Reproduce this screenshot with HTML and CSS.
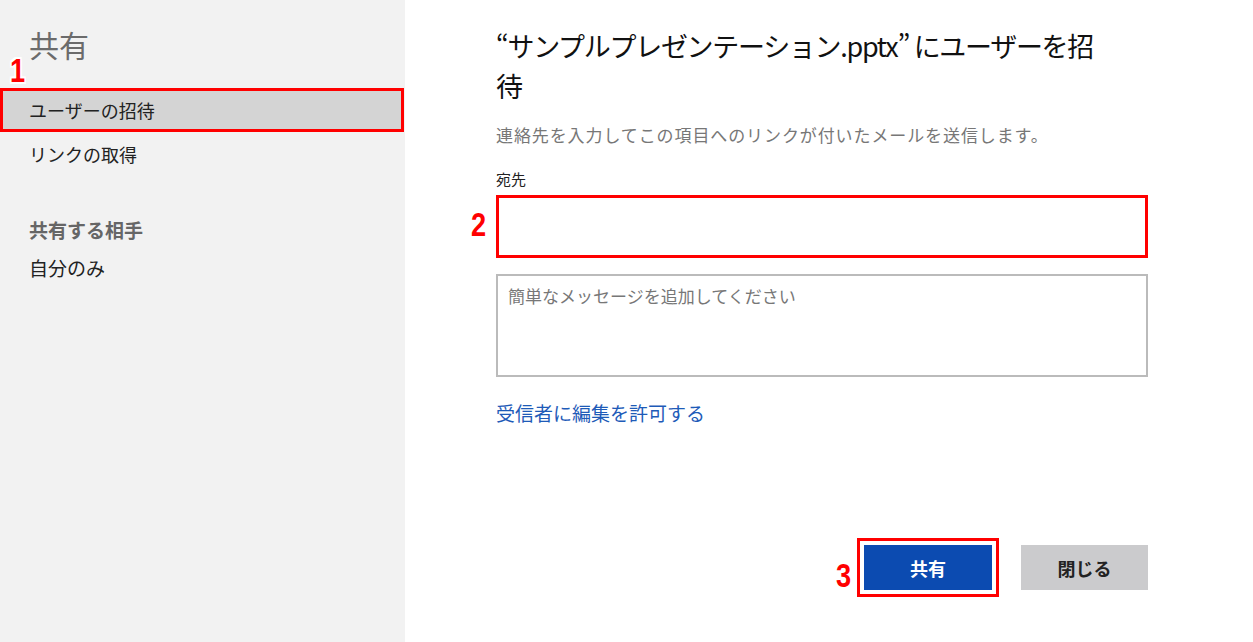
FILE: index.html
```html
<!DOCTYPE html>
<html lang="ja">
<head>
  <meta charset="UTF-8">
  <title>共有</title>
  <link rel="stylesheet" href="styles.css">
</head>
<body>

<!-- 左側メニュー -->
<div class="sidebar">
  <div class="side-title">共有</div>
  <div class="nav-item active">
    <span class="mark mark-1">1</span>
    ユーザーの招待
  </div>
  <div class="nav-item">リンクの取得</div>
  <div class="side-head">共有する相手</div>
  <div class="side-text">自分のみ</div>
</div>

<!-- 招待フォーム -->
<div class="main">
  <h1 class="main-title">“サンプルプレゼンテーション.pptx” にユーザーを招<br>待</h1>
  <p class="desc">連絡先を入力してこの項目へのリンクが付いたメールを送信します。</p>
  <div class="label">宛先</div>
  <div class="to-box">
    <span class="mark mark-2">2</span>
    <input type="text" class="to-input">
  </div>
  <textarea class="msg" placeholder="簡単なメッセージを追加してください"></textarea>
  <a href="#" class="allow-link">受信者に編集を許可する</a>

  <div class="buttons">
    <div class="share-wrap">
      <span class="mark mark-3">3</span>
      <button class="btn btn-share">共有</button>
    </div>
    <button class="btn btn-close">閉じる</button>
  </div>
</div>

</body>
</html>
```

FILE: styles.css
```css
html, body {
  margin: 0;
  height: 100%;
}
body {
  display: flex;
  font-family: "Noto Sans CJK JP", "Noto Sans", sans-serif;
  background: #fff;
  color: #222;
  overflow: hidden;
}

/* 左側メニュー */
.sidebar {
  width: 405px;
  flex-shrink: 0;
  background: #f2f2f2;
  padding-top: 22px;
  box-sizing: border-box;
}
.side-title {
  padding-left: 29px;
  font-size: 30px;
  line-height: 44px;
  color: #6b6b6b;
  margin-bottom: 22px;
}
.nav-item {
  position: relative;
  width: 404px;
  height: 44px;
  box-sizing: border-box;
  padding-left: 29px;
  font-size: 18px;
  line-height: 44px;
}
.nav-item.active {
  background: #d4d4d4;
  border: 3px solid #ff0000;
  padding-left: 26px;
  line-height: 38px;
}
.side-head {
  margin-top: 41px;
  padding-left: 29px;
  font-size: 19px;
  font-weight: bold;
  line-height: 26px;
  color: #666;
}
.side-text {
  margin-top: 12px;
  padding-left: 29px;
  font-size: 19px;
  line-height: 26px;
}

/* 注釈の番号 */
.mark {
  position: absolute;
  font-family: "Liberation Sans", Arial, sans-serif;
  font-weight: bold;
  font-size: 34px;
  line-height: 34px;
  color: #ff0000;
  transform: scaleX(0.8);
  text-shadow: -2px 0 #fff, 2px 0 #fff, 0 -2px #fff, 0 2px #fff,
               -2px -2px #fff, 2px 2px #fff, -2px 2px #fff, 2px -2px #fff;
}
.mark-1 {
  left: 5px;
  top: -38px;
}
.mark-2 {
  left: -27px;
  top: 12px;
}
.mark-3 {
  left: -26px;
  top: 17px;
}

/* 右側フォーム */
.main {
  flex: 1;
  padding: 26px 0 0 91px;
  display: flex;
  flex-direction: column;
}
.main-title {
  margin: 0;
  font-size: 27px;
  font-weight: normal;
  line-height: 40px;
  letter-spacing: -1.3px;
  color: #111;
}
.desc {
  margin: 17px 0 0;
  font-size: 17px;
  line-height: 24px;
  color: #777;
  letter-spacing: 0.9px;
}
.label {
  margin-top: 22px;
  font-size: 15px;
  line-height: 20px;
  color: #222;
}
.to-box {
  position: relative;
  margin-top: 6px;
  width: 652px;
  height: 63px;
}
.to-input {
  width: 100%;
  height: 100%;
  box-sizing: border-box;
  border: 3px solid #ff0000;
  outline: none;
  font-size: 17px;
  padding: 0 10px;
}
.msg {
  margin-top: 16px;
  width: 652px;
  height: 103px;
  box-sizing: border-box;
  border: 2px solid #bbbbbb;
  padding: 8px 10px;
  font-family: "Noto Sans CJK JP", "Noto Sans", sans-serif;
  font-size: 17px;
  line-height: 24px;
  resize: none;
  outline: none;
}
.msg::placeholder {
  color: #777;
}
.allow-link {
  margin-top: 24px;
  font-size: 19px;
  line-height: 24px;
  color: #1e5bb8;
  text-decoration: none;
  align-self: flex-start;
}

/* ボタン */
.buttons {
  margin-top: 113px;
  width: 652px;
  display: flex;
  justify-content: flex-end;
  align-items: center;
  gap: 22px;
}
.share-wrap {
  position: relative;
  border: 3px solid #ff0000;
  padding: 4px;
  display: flex;
}
.btn {
  width: 128px;
  height: 45px;
  border: none;
  font-family: "Noto Sans CJK JP", "Noto Sans", sans-serif;
  font-size: 18px;
  font-weight: bold;
  padding: 0;
}
.btn-share {
  background: #0c4bb1;
  color: #fff;
}
.btn-close {
  width: 127px;
  background: #cbcbcd;
  color: #222;
}
```
